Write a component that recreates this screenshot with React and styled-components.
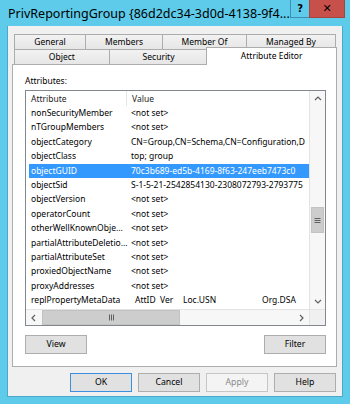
import styled, { createGlobalStyle } from "styled-components"

const GlobalStyle = createGlobalStyle`
    html, body {
        margin: 0;
        padding: 0;
    }
    body {
        width: 350px;
        height: 404px;
        overflow: hidden;
        font-family: "Noto Sans", "Open Sans", sans-serif;
        color: #000;
    }
`

const Window = styled.div`
    width: 350px;
    height: 404px;
    background: #5ecbea;
    display: flex;
    flex-direction: column;
    box-sizing: border-box;
`

const TitleBar = styled.div`
    height: 26px;
    display: flex;
    align-items: flex-start;
    padding: 0 5px 0 8px;
    flex-shrink: 0;
`

const Title = styled.div`
    flex: 1;
    font-size: 12.5px;
    line-height: 27px;
    white-space: nowrap;
`

const CaptionButton = styled.div`
    height: 18px;
    width: ${p => p.$close ? "40px" : "23px"};
    box-sizing: border-box;
    background: ${p => p.$close ? "#c7504b" : "#5ecbea"};
    border: 1px solid ${p => p.$close ? "#a64440" : "#3c8fb0"};
    border-top: none;
    display: flex;
    align-items: center;
    justify-content: center;
    font-size: ${p => p.$close ? "11px" : "10px"};
    font-weight: bold;
    font-family: "DejaVu Sans", sans-serif;
    margin-left: ${p => p.$close ? "-1px" : "0"};
`

const Client = styled.div`
    flex: 1;
    margin: 0 7px 7px 7px;
    background: #f0f0f0;
    border: 1px solid #4aa8c9;
    border-top: none;
    display: flex;
    flex-direction: column;
    padding: 8px 5px 0 4px;
`

const TabStrip = styled.div`
    display: flex;
    flex-direction: column;
    margin-left: 2px;
`

const TabRow = styled.div`
    display: flex;
    height: 15px;
    align-items: flex-start;
`

const Tab = styled.div`
    width: ${p => p.$w}px;
    height: ${p => p.$active ? "18px" : "15px"};
    box-sizing: border-box;
    border: 1px solid #acacac;
    border-bottom: none;
    background: ${p => p.$active ? "#fff" : "linear-gradient(#f2f2f2, #e6e6e6)"};
    font-size: 8.5px;
    line-height: ${p => p.$active ? "16px" : "14px"};
    text-align: center;
    white-space: nowrap;
    margin-left: ${p => p.$first ? "0" : p.$active ? "-2px" : "-1px"};
    margin-top: ${p => p.$active ? "-2px" : "0"};
    position: relative;
    z-index: ${p => p.$active ? 1 : 0};
`

const Panel = styled.div`
    height: 303px;
    box-sizing: border-box;
    background: #fff;
    border: 1px solid #adadad;
    padding: 0 10px 0 12px;
    display: flex;
    flex-direction: column;
`

const Label = styled.div`
    font-size: 8.5px;
    line-height: 12px;
    margin-top: 10px;
    margin-bottom: 3px;
`

const ListBox = styled.div`
    height: 236px;
    box-sizing: border-box;
    border: 1px solid #828790;
    display: grid;
    grid-template-columns: 1fr 16px;
    grid-template-rows: 1fr 16px;
    font-size: 8.5px;
`

const ListArea = styled.div`
    overflow: hidden;
    background: #fff;
`

const Header = styled.div`
    height: 15px;
    display: flex;
    line-height: 15px;
    color: #1e1e1e;
`

const HeaderCell = styled.div`
    width: ${p => p.$w ? `${p.$w}px` : "auto"};
    flex: ${p => p.$w ? "none" : 1};
    box-sizing: border-box;
    padding-left: ${p => p.$pad}px;
    border-right: ${p => p.$w ? "1px solid #e5e5e5" : "none"};
`

const Row = styled.div`
    height: 14.4px;
    line-height: 14.4px;
    margin-left: 3px;
    display: flex;
    white-space: nowrap;
    background: ${p => p.$selected ? "#3399ff" : "transparent"};
    color: ${p => p.$selected ? "#fff" : "#000"};
`

const AttrCell = styled.div`
    width: 100px;
    flex: none;
    padding-left: 2px;
    box-sizing: border-box;
`

const ValueCell = styled.div`
    flex: 1;
    padding-left: 2px;
`

const MetaCell = styled.div`
    flex: 1;
    display: grid;
    grid-template-columns: 25px 23px 79px auto;
    padding-left: 6px;
`

const VScroll = styled.div`
    border-left: 1px solid #e3e3e3;
    background: #f7f7f7;
    display: flex;
    flex-direction: column;
`

const HScroll = styled.div`
    border-top: 1px solid #e3e3e3;
    background: #f7f7f7;
    display: flex;
`

const Corner = styled.div`
    background: #f0f0f0;
    border-top: 1px solid #e3e3e3;
    border-left: 1px solid #e3e3e3;
`

const ArrowButton = styled.div`
    width: ${p => p.$horizontal ? "15px" : "auto"};
    height: ${p => p.$horizontal ? "auto" : "15px"};
    display: flex;
    align-items: center;
    justify-content: center;
    flex: none;
`

const Track = styled.div`
    flex: 1;
    display: flex;
    flex-direction: ${p => p.$horizontal ? "row" : "column"};
`

const Thumb = styled.div`
    background: #cdcdcd;
    border: 1px solid #c2c2c2;
    box-sizing: border-box;
    display: flex;
    align-items: center;
    justify-content: center;
    ${p => p.$horizontal
        ? `width: 138px; margin-left: 1px;`
        : `height: 26px; margin-top: 101px; margin-left: 1px; margin-right: 1px;`}
`

const ButtonRow = styled.div`
    display: flex;
    justify-content: ${p => p.$end ? "flex-end" : "space-between"};
    gap: 6px;
    margin-top: ${p => p.$end ? "6px" : "9px"};
    margin-right: ${p => p.$end ? "1px" : "0"};
`

const Button = styled.div`
    width: ${p => p.$w || 62}px;
    height: 19px;
    box-sizing: border-box;
    border: 1px solid ${p => p.$default ? "#3c8fdc" : p.$disabled ? "#c6c6c6" : "#adadad"};
    background: ${p => p.$disabled ? "#f4f4f4" : "#e1e1e1"};
    color: ${p => p.$disabled ? "#8a8a8a" : "#000"};
    font-size: 8.7px;
    line-height: 17px;
    text-align: center;
`

const Chevron = ({ dir }) => {
    const pts = {
        up: "1,5 4,2 7,5",
        down: "1,2 4,5 7,2",
        left: "5,1 2,4 5,7",
        right: "2,1 5,4 2,7",
    }[dir]
    return (
        <svg width="8" height="8" viewBox="0 0 8 8">
            <polyline points={pts} fill="none" stroke="#606060" strokeWidth="1.2" />
        </svg>
    )
}

const Grip = ({ horizontal }) => (
    <svg width="7" height="7" viewBox="0 0 7 7">
        {[1, 3, 5].map(v => horizontal
            ? <line key={v} x1={v + 0.5} y1="0.5" x2={v + 0.5} y2="6.5" stroke="#606060" strokeWidth="1" />
            : <line key={v} x1="0.5" y1={v + 0.5} x2="6.5" y2={v + 0.5} stroke="#606060" strokeWidth="1" />
        )}
    </svg>
)

// values are written as far as the list shows them before the scroll bar
const rows = [
    ["nonSecurityMember", "<not set>"],
    ["nTGroupMembers", "<not set>"],
    ["objectCategory", "CN=Group,CN=Schema,CN=Configuration,D"],
    ["objectClass", "top; group"],
    ["objectGUID", "70c3b689-ed5b-4169-8f63-247eeb7473c0", true],
    ["objectSid", "S-1-5-21-2542854130-2308072793-2793775"],
    ["objectVersion", "<not set>"],
    ["operatorCount", "<not set>"],
    ["otherWellKnownObje...", "<not set>"],
    ["partialAttributeDeletio...", "<not set>"],
    ["partialAttributeSet", "<not set>"],
    ["proxiedObjectName", "<not set>"],
    ["proxyAddresses", "<not set>"],
]

export default function App() {
    return (
        <Window>
            <GlobalStyle />
            <TitleBar>
                <Title>PrivReportingGroup {"{86d2dc34-3d0d-4138-9f4..."}</Title>
                <CaptionButton>?</CaptionButton>
                <CaptionButton $close>✕</CaptionButton>
            </TitleBar>
            <Client>
                <TabStrip>
                    <TabRow>
                        <Tab $first $w={72}>General</Tab>
                        <Tab $w={78}>Members</Tab>
                        <Tab $w={85}>Member Of</Tab>
                        <Tab $w={90}>Managed By</Tab>
                    </TabRow>
                    <TabRow>
                        <Tab $first $w={96}>Object</Tab>
                        <Tab $w={100}>Security</Tab>
                        <Tab $active $w={131}>Attribute Editor</Tab>
                    </TabRow>
                </TabStrip>
                <Panel>
                    <Label>Attributes:</Label>
                    <ListBox>
                        <ListArea>
                            <Header>
                                <HeaderCell $w={101} $pad={5}>Attribute</HeaderCell>
                                <HeaderCell $pad={5}>Value</HeaderCell>
                            </Header>
                            {rows.map(([attr, val, sel]) => (
                                <Row key={attr} $selected={sel}>
                                    <AttrCell>{attr}</AttrCell>
                                    <ValueCell>{val}</ValueCell>
                                </Row>
                            ))}
                            <Row>
                                <AttrCell>replPropertyMetaData</AttrCell>
                                <MetaCell>
                                    <span>AttID</span>
                                    <span>Ver</span>
                                    <span>Loc.USN</span>
                                    <span>Org.DSA</span>
                                </MetaCell>
                            </Row>
                        </ListArea>
                        <VScroll>
                            <ArrowButton><Chevron dir="up" /></ArrowButton>
                            <Track>
                                <Thumb><Grip /></Thumb>
                            </Track>
                            <ArrowButton><Chevron dir="down" /></ArrowButton>
                        </VScroll>
                        <HScroll>
                            <ArrowButton $horizontal><Chevron dir="left" /></ArrowButton>
                            <Track $horizontal>
                                <Thumb $horizontal><Grip horizontal /></Thumb>
                            </Track>
                            <ArrowButton $horizontal><Chevron dir="right" /></ArrowButton>
                        </HScroll>
                        <Corner />
                    </ListBox>
                    <ButtonRow>
                        <Button>View</Button>
                        <Button>Filter</Button>
                    </ButtonRow>
                </Panel>
                <ButtonRow $end>
                    <Button $default>OK</Button>
                    <Button>Cancel</Button>
                    <Button $disabled>Apply</Button>
                    <Button>Help</Button>
                </ButtonRow>
            </Client>
        </Window>
    )
}
